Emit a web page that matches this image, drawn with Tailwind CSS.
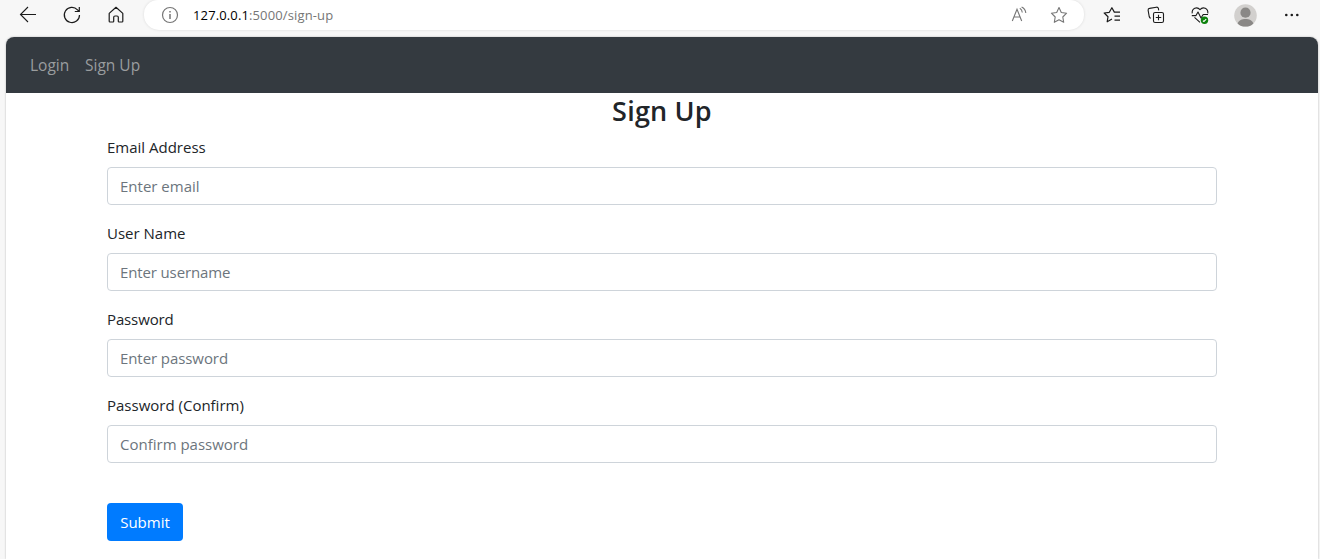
<!DOCTYPE html>
<html lang="en">
<head>
<meta charset="utf-8">
<title>Sign Up</title>
<script src="https://cdn.jsdelivr.net/npm/@tailwindcss/browser@4"></script>
</head>
<body class="h-[559px] overflow-hidden bg-[#f7f7f7] font-['Open_Sans','Noto_Sans',sans-serif] text-[15px] text-[#212529]">
<div class="flex h-full flex-col">
  <header class="flex h-[37px] shrink-0 items-start">
    <div class="flex h-[30px] w-36 items-center gap-6 pl-[18px] text-[#1b1b1b]">
      <svg class="size-5" viewBox="0 0 20 20" fill="none" stroke="currentColor" stroke-width="1.1"><path d="M18 9.5H2.5M10 2L2.5 9.5L10 17"/></svg>
      <svg class="size-5" viewBox="0 0 20 20" fill="none" stroke="currentColor" stroke-width="1.2"><path d="M17.5 9.9A7.6 7.6 0 1 1 15.5 4.8L17 6.4M17.3 2V6.5H12.8"/></svg>
      <svg class="size-5" viewBox="0 0 20 20" fill="none" stroke="currentColor" stroke-width="1.2" stroke-linejoin="round"><path d="M3.2 8.4L10 2.3L16.8 8.4V16.2Q16.8 17 16 17H13Q12.3 17 12.3 16.2V12.3Q12.3 11 11 11H9Q7.7 11 7.7 12.3V16.2Q7.7 17 7 17H4Q3.2 17 3.2 16.2Z"/></svg>
    </div>
    <div class="flex h-[30px] w-[940px] items-center rounded-b-[15px] rounded-t-[14px] bg-white pl-4 pr-[15px] text-[#767676] shadow-[0_0_3px_rgba(0,0,0,0.12)]">
      <svg class="size-5" viewBox="0 0 20 20" fill="none" stroke="currentColor" stroke-width="1.2"><circle cx="10" cy="10" r="7.5"/><path d="M10 9V14M10 6V7.6" stroke-width="1.5"/></svg>
      <div class="ml-[13px] whitespace-nowrap text-[13px] leading-[30px] tracking-[0.13px]"><span class="text-black">127.0.0.1</span>:5000/sign-up</div>
      <svg class="ml-auto size-5" viewBox="0 0 20 20" fill="none" stroke="currentColor" stroke-width="1.1"><path d="M3.3 16L8 4.2L12.7 16M4.9 12H11.1M10.8 3.3Q13.1 4.6 13.3 7.5M12.6 2.1Q16.4 3.8 16.8 8"/></svg>
      <svg class="ml-5 size-5" viewBox="0 0 20 20" fill="none" stroke="currentColor" stroke-width="1.1" stroke-linejoin="round"><path d="M10 2.6L12.3 7.5L17.6 8.2L13.8 12L14.7 17.3L10 14.8L5.3 17.3L6.2 12L2.4 8.2L7.7 7.5Z"/></svg>
    </div>
    <div class="flex h-[30px] items-center pl-[18px] text-[#1b1b1b]">
      <svg class="size-5" viewBox="0 0 20 20" fill="none" stroke="currentColor" stroke-width="1.2" stroke-linejoin="round"><path d="M10 13.9L5.2 16.8L6 11.7L2.2 8L7.3 7.3L9.9 2.7L12.2 6.9M11.8 7.2H18M12.5 11.2H18M12.5 15.2H18"/></svg>
      <svg class="ml-6 size-5" viewBox="0 0 20 20" fill="none" stroke="currentColor" stroke-width="1.1" stroke-linejoin="round"><path d="M4.8 13.3Q3.6 13 3.2 11.5L2.1 5.2Q2 3.6 3.5 3.4L10.4 2.2Q12 2 12.4 3.4L12.7 5.3"/><rect x="7.5" y="7.5" width="10" height="10" rx="1.6"/><path d="M12.5 9.8V15.2M9.8 12.5H15.2"/></svg>
      <svg class="ml-6 size-5" viewBox="0 0 20 20" fill="none" stroke="currentColor" stroke-width="1.1" stroke-linejoin="round"><path d="M2.2 8.4C1.6 3.4 7 1.2 10 4.6C13 1.2 18.4 3.4 17.8 8.4M1.8 10.6H6L8 7L11 13L13.2 9.5H18M4.5 12.4L10 17.3"/><circle cx="14.5" cy="15.3" r="3.7" fill="#0c820c" stroke="none"/><path d="M12.9 15.8L14 16.4L16.2 14.1" stroke="white"/></svg>
      <svg class="ml-6 size-[23px]" viewBox="0 0 23 23"><circle cx="11.5" cy="11.5" r="11.3" fill="#d2d0ce"/><circle cx="11.5" cy="8.7" r="5.1" fill="#8a8886"/><path d="M3.6 19.4C5.5 13.5 17.5 13.5 19.4 19.4A11.3 11.3 0 0 1 3.6 19.4Z" fill="#8a8886"/></svg>
      <svg class="ml-[25px] size-5" viewBox="0 0 20 20" fill="currentColor"><circle cx="4.3" cy="10" r="1.3"/><circle cx="9.8" cy="10" r="1.3"/><circle cx="15.3" cy="10" r="1.3"/></svg>
    </div>
  </header>
  <main class="ml-1.5 mr-0.5 grow overflow-hidden rounded-t-lg bg-white shadow-[0_0_2px_rgba(0,0,0,0.3)]">
    <nav class="flex h-14 items-center gap-4 bg-[#343a40] pl-6 text-[15.5px] leading-6 text-[#9a9d9f]">
      <a class="w-[39px] whitespace-nowrap">Login</a><a class="whitespace-nowrap">Sign Up</a>
    </nav>
    <form class="mx-auto w-[1110px]">
      <h3 class="mb-2 h-[34px] text-center text-[27px] font-semibold leading-[36px] tracking-[0.2px]">Sign Up</h3>
      <div class="mb-4"><label class="mb-2 block leading-6">Email Address</label><div class="flex h-[38px] items-center rounded border border-[#ced4da] px-3 text-[#6c757d]">Enter email</div></div>
      <div class="mb-4"><label class="mb-2 block leading-6">User Name</label><div class="flex h-[38px] items-center rounded border border-[#ced4da] px-3 tracking-[-0.13px] text-[#6c757d]">Enter username</div></div>
      <div class="mb-4"><label class="mb-2 block leading-6 tracking-[-0.13px]">Password</label><div class="flex h-[38px] items-center rounded border border-[#ced4da] px-3 tracking-[-0.08px] text-[#6c757d]">Enter password</div></div>
      <div class="mb-4"><label class="mb-2 block leading-6">Password (Confirm)</label><div class="flex h-[38px] items-center rounded border border-[#ced4da] px-3 text-[#6c757d]">Confirm password</div></div>
      <button type="button" class="mt-10 flex h-[38px] w-[76px] items-center justify-center rounded bg-[#007bff] text-white">Submit</button>
    </form>
  </main>
</div>
</body>
</html>
